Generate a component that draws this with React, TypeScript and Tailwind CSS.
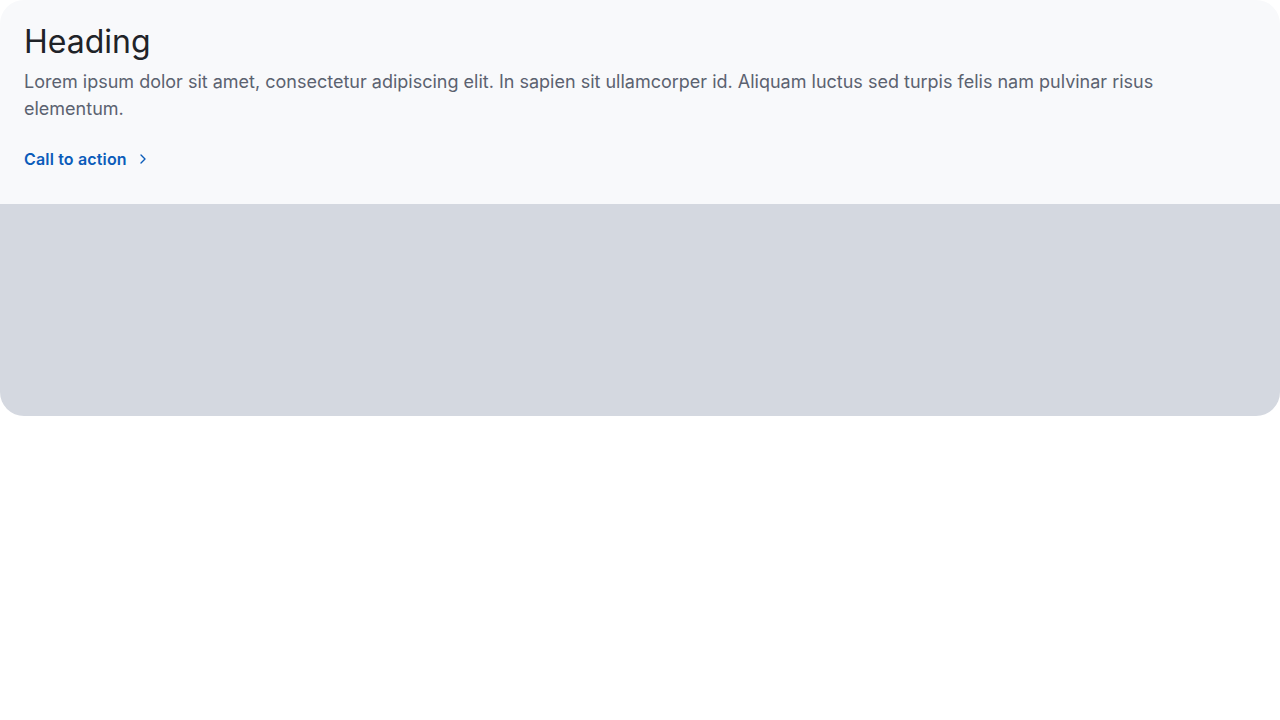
import React from 'react';
import { ChevronRight } from 'lucide-react';

export default function App() {
  return (
    <div className="w-full bg-white" style={{ fontFamily: 'Inter, "Noto Sans", sans-serif' }}>
      <div className="rounded-3xl overflow-hidden">
        <div className="bg-[#f8f9fb] px-6 pt-5 pb-[33px]">
          <h1 className="text-[32px] leading-[44px] text-[#1f2328]">Heading</h1>
          <p className="mt-1 max-w-[1160px] text-lg leading-[27px] text-[#5b6270]">
            Lorem ipsum dolor sit amet, consectetur adipiscing elit. In sapien sit ullamcorper id. Aliquam luctus sed turpis felis nam pulvinar risus elementum.
          </p>
          <a href="#" className="mt-[25px] inline-flex items-center gap-2 text-base font-semibold tracking-[0.01em] text-[#0b5cba]">
            Call to action
            <ChevronRight size={16} strokeWidth={2} />
          </a>
        </div>
        <div className="h-[212px] bg-[#d4d8e0]" />
      </div>
    </div>
  );
}
